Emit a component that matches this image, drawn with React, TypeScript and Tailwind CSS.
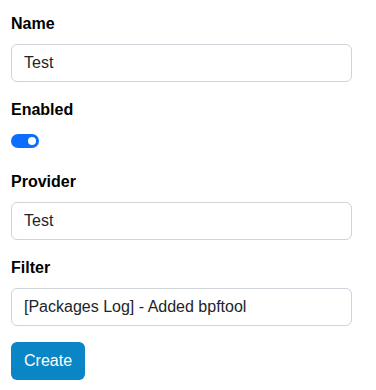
export default function App() {
  const font = { fontFamily: '"Liberation Sans", Arial, sans-serif' };
  return (
    <div className="bg-white px-[11px] pb-[11px] pr-[24px] pt-[12px] text-[16px] leading-[24px] text-[#212529]" style={font}>
      <div className="mb-4">
        <label className="mb-2 block font-bold text-black">Name</label>
        <input
          readOnly
          value="Test"
          className="block h-[38px] w-full rounded-[6px] border border-[#ced4da] bg-white px-3 text-[16px] text-[#212529] outline-none"
        />
      </div>
      <div className="mb-4">
        <label className="mb-2 block font-bold text-black">Enabled</label>
        <div className="h-[24px] pt-[4px]">
          <div className="relative h-[14px] w-[28px] rounded-full bg-[#0d6efd]">
            <div className="absolute right-[3px] top-[3px] h-[8px] w-[8px] rounded-full bg-white" />
          </div>
        </div>
      </div>
      <div className="mb-4">
        <label className="mb-2 block font-bold text-black">Provider</label>
        <input
          readOnly
          value="Test"
          className="block h-[38px] w-full rounded-[6px] border border-[#ced4da] bg-white px-3 text-[16px] text-[#212529] outline-none"
        />
      </div>
      <div className="mb-4">
        <label className="mb-2 block font-bold text-black">Filter</label>
        <input
          readOnly
          value="[Packages Log] - Added bpftool"
          className="block h-[38px] w-full rounded-[6px] border border-[#ced4da] bg-white px-3 text-[16px] text-[#212529] outline-none"
        />
      </div>
      <button className="h-[38px] rounded-[6px] bg-[#0a85c5] px-[13px] text-[16px] text-white">Create</button>
    </div>
  );
}
